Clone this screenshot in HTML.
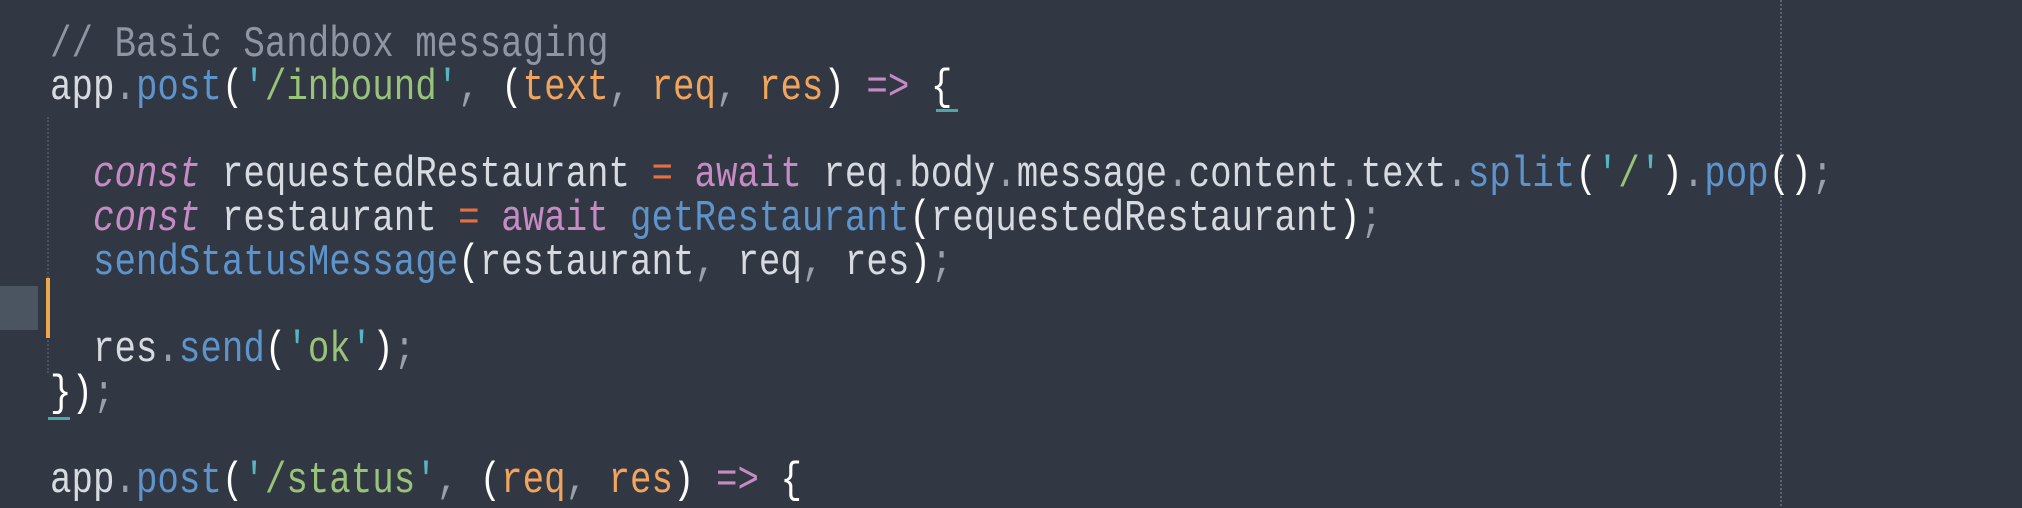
<!DOCTYPE html>
<html><head><meta charset="utf-8"><style>
html,body{margin:0;padding:0;}
body{width:2022px;height:506px;background:#323843;position:relative;overflow:hidden;font-family:"Liberation Mono",monospace;}
.l{position:absolute;left:50px;white-space:pre;font-size:35.8px;line-height:44px;height:44px;color:#d7dae0;transform:scaleY(1.22);transform-origin:left center;}
.c{color:#8e95a3}.b{color:#5e94cc}.g{color:#98c379}.o{color:#f0a45d}.p{color:#c68bc4}.r{color:#e8703f}.q{color:#56b6c2}.d{color:#98a0ab}.w{color:#ffffff}
.i{font-style:italic}
</style></head><body>
<div style="position:absolute;left:1780px;top:0;height:506px;border-left:2px dotted #5b6270;"></div>
<div style="position:absolute;left:47px;top:117px;height:256px;border-left:2px dotted #4d5461;"></div>
<div style="position:absolute;left:0;top:286px;width:38px;height:44px;background:#4b5461;"></div>
<div style="position:absolute;left:46px;top:278px;width:4px;height:60px;background:#f0a84d;"></div>
<div style="position:absolute;left:936px;top:109px;width:22px;height:3px;background:#4aa8a8;"></div>
<div style="position:absolute;left:48px;top:417px;width:22px;height:3px;background:#4aa8a8;"></div>

<div class="l" style="top:23px"><span class="c">// Basic Sandbox messaging</span></div>
<div class="l" style="top:66px">app<span class="d">.</span><span class="b">post</span><span class="w">(</span><span class="q">'</span><span class="g">/inbound</span><span class="q">'</span><span class="d">,</span> <span class="w">(</span><span class="o">text</span><span class="d">,</span> <span class="o">req</span><span class="d">,</span> <span class="o">res</span><span class="w">)</span> <span class="p">=&gt;</span> <span class="w">{</span></div>
<div class="l" style="top:153px">  <span class="p i">const</span> requestedRestaurant <span class="r">=</span> <span class="p">await</span> req<span class="d">.</span>body<span class="d">.</span>message<span class="d">.</span>content<span class="d">.</span>text<span class="d">.</span><span class="b">split</span><span class="w">(</span><span class="q">'</span><span class="g">/</span><span class="q">'</span><span class="w">)</span><span class="d">.</span><span class="b">pop</span><span class="w">()</span><span class="d">;</span></div>
<div class="l" style="top:197px">  <span class="p i">const</span> restaurant <span class="r">=</span> <span class="p">await</span> <span class="b">getRestaurant</span><span class="w">(</span>requestedRestaurant<span class="w">)</span><span class="d">;</span></div>
<div class="l" style="top:241px">  <span class="b">sendStatusMessage</span><span class="w">(</span>restaurant<span class="d">,</span> req<span class="d">,</span> res<span class="w">)</span><span class="d">;</span></div>
<div class="l" style="top:328px">  res<span class="d">.</span><span class="b">send</span><span class="w">(</span><span class="q">'</span><span class="g">ok</span><span class="q">'</span><span class="w">)</span><span class="d">;</span></div>
<div class="l" style="top:372px"><span class="w">})</span><span class="d">;</span></div>
<div class="l" style="top:459px">app<span class="d">.</span><span class="b">post</span><span class="w">(</span><span class="q">'</span><span class="g">/status</span><span class="q">'</span><span class="d">,</span> <span class="w">(</span><span class="o">req</span><span class="d">,</span> <span class="o">res</span><span class="w">)</span> <span class="p">=&gt;</span> <span class="w">{</span></div>
</body></html>
